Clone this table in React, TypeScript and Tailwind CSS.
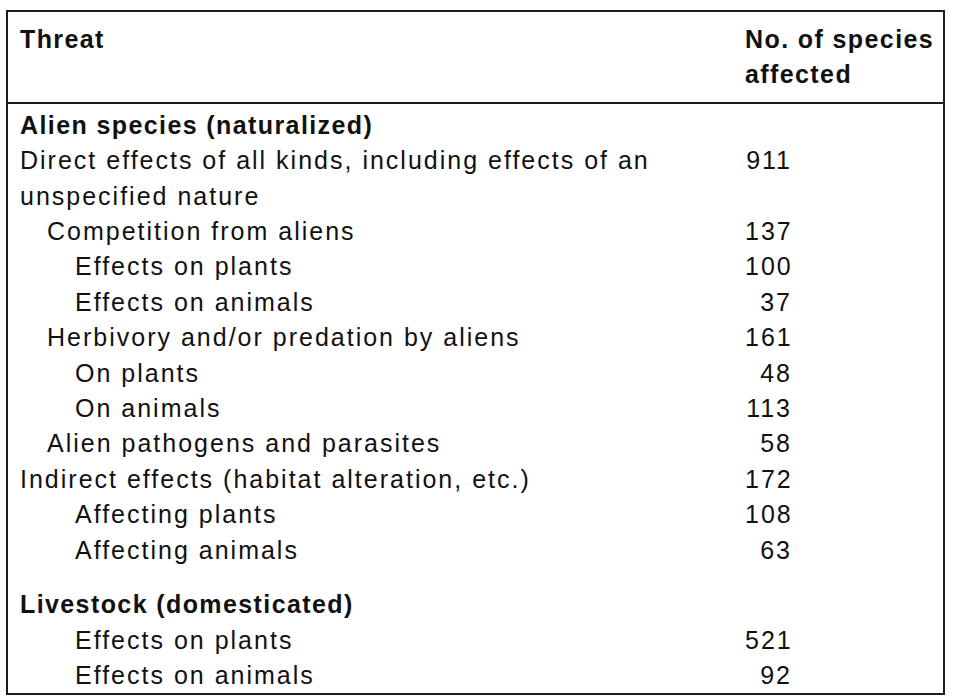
const rows: { label: string; value?: string; level: 0 | 1 | 2; bold?: boolean; gap?: boolean }[] = [
  { label: "Alien species (naturalized)", level: 0, bold: true },
  { label: "Direct effects of all kinds, including effects of an unspecified nature", value: "911", level: 0 },
  { label: "Competition from aliens", value: "137", level: 1 },
  { label: "Effects on plants", value: "100", level: 2 },
  { label: "Effects on animals", value: "37", level: 2 },
  { label: "Herbivory and/or predation by aliens", value: "161", level: 1 },
  { label: "On plants", value: "48", level: 2 },
  { label: "On animals", value: "113", level: 2 },
  { label: "Alien pathogens and parasites", value: "58", level: 1 },
  { label: "Indirect effects (habitat alteration, etc.)", value: "172", level: 0 },
  { label: "Affecting plants", value: "108", level: 2 },
  { label: "Affecting animals", value: "63", level: 2 },
  { label: "Livestock (domesticated)", level: 0, bold: true, gap: true },
  { label: "Effects on plants", value: "521", level: 2 },
  { label: "Effects on animals", value: "92", level: 2 },
];

const indent = ["pl-0", "pl-[27px]", "pl-[55px]"];

export default function App() {
  return (
    <div className="min-h-screen bg-white pt-[10px] pl-[6px] font-['Liberation_Sans',Arial,sans-serif] text-[25px] leading-[35.4px] tracking-[2px] text-[#111]">
      <div className="w-[939px] border-2 border-[#1c1c1c]">
        {/* Header */}
        <div className="flex border-b-2 border-[#1c1c1c] pl-3 pt-[10px] pb-[9px] font-bold tracking-[1.4px]">
          <div className="w-[725px]">Threat</div>
          <div className="whitespace-nowrap">
            No. of species
            <br />
            affected
          </div>
        </div>

        {/* Body */}
        <div className="pl-3 pt-[4px]">
          {rows.map((row, i) => (
            <div key={i} className={`flex ${row.gap ? "mt-[19px]" : ""}`}>
              <div
                className={`w-[725px] pr-[60px] ${indent[row.level]} ${row.bold ? "font-bold tracking-[1.4px]" : ""}`}
              >
                {row.label}
              </div>
              <div className="w-[47px] text-right">{row.value}</div>
            </div>
          ))}
        </div>
      </div>
    </div>
  );
}
